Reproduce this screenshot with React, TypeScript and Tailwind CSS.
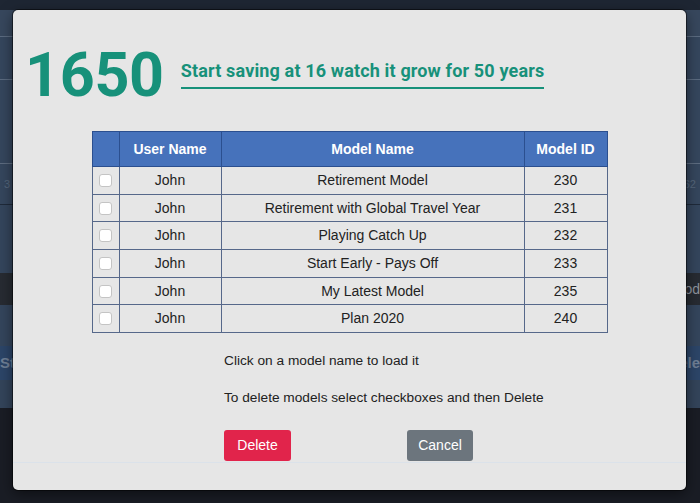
import React from 'react';

const models = [
    { user: 'John', name: 'Retirement Model', id: 230 },
    { user: 'John', name: 'Retirement with Global Travel Year', id: 231 },
    { user: 'John', name: 'Playing Catch Up', id: 232 },
    { user: 'John', name: 'Start Early - Pays Off', id: 233 },
    { user: 'John', name: 'My Latest Model', id: 235 },
    { user: 'John', name: 'Plan 2020', id: 240 },
];

const App = () => {
    return (
        <div className="relative w-[700px] h-[503px] overflow-hidden bg-[#1b1f27] font-['Liberation_Sans',Arial,sans-serif]">
            {/* dimmed page behind the modal */}
            <div className="flex flex-col h-full">
                <div className="h-[10px] bg-[#1e2633]" />
                <div className="h-[27px] bg-[#37475d] border-b border-[#5b6b80]" />
                <div className="h-[43px] bg-[#35465d] border-b border-[#5b6b80]" />
                <div className="h-[84px] bg-[#35465d] border-b border-[#5d6c80]" />
                <div className="h-[41px] bg-[#35465d] border-b border-[#1f2a3a] flex items-center justify-between px-1 text-[11px] text-[#56667c]">
                    <span>3</span>
                    <span>62</span>
                </div>
                <div className="h-[68px] bg-[#34455c]" />
                <div className="h-[32px] bg-[#272b32] flex items-center justify-end text-[14px] text-[#8d939c]">od</div>
                <div className="h-[41px] bg-[#34455c]" />
                <div className="h-[34px] bg-[#2c4568] flex items-center justify-between text-[15px] font-bold text-[#6f7f95]">
                    <span>St</span>
                    <span>ele</span>
                </div>
                <div className="h-[28px] bg-[#33445a]" />
                <div className="flex-1 bg-[#1a1d25]" />
            </div>

            {/* modal */}
            <div className="absolute left-[13px] top-[10px] w-[673px] h-[480px] bg-[#e6e6e6] rounded-[5px] shadow-[0_0_0_1px_rgba(0,0,0,0.5),0_4px_14px_rgba(0,0,0,0.5)] flex flex-col">
                <div className="flex items-end pl-[12px] pt-[34px] font-['Roboto',sans-serif] text-[#17917a]">
                    <span className="text-[61px] font-bold leading-[62px] tracking-[-0.3px]">1650</span>
                    <h2 className="ml-[17px] mb-[17px] text-[18px] font-bold leading-[24px] border-b-2 border-[#17917a] pb-[4px] tracking-[0.15px]">
                        Start saving at 16 watch it grow for 50 years
                    </h2>
                </div>

                <table className="mx-auto mt-[25px] w-[516px] border-collapse text-[14px] text-[#222]">
                    <thead>
                        <tr className="bg-[#4672bb] text-white font-bold h-[35px]">
                            <th className="w-[27px] border border-[#2b4f8f]" />
                            <th className="w-[102px] border border-[#2b4f8f]">User Name</th>
                            <th className="w-[303px] border border-[#2b4f8f]">Model Name</th>
                            <th className="border border-[#2b4f8f]">Model ID</th>
                        </tr>
                    </thead>
                    <tbody>
                        {models.map(m => (
                            <tr key={m.id} className="h-[27.7px] text-center">
                                <td className="border border-[#56688a]">
                                    <div className="mx-auto w-[13px] h-[13px] bg-white border border-[#c4c4c4] rounded-[3px]" />
                                </td>
                                <td className="border border-[#56688a]">{m.user}</td>
                                <td className="border border-[#56688a]">{m.name}</td>
                                <td className="border border-[#56688a]">{m.id}</td>
                            </tr>
                        ))}
                    </tbody>
                </table>

                <div className="pl-[211px] mt-[19px] text-[13.7px] text-[#222] flex flex-col">
                    <p className="leading-[18px]">Click on a model name to load it</p>
                    <p className="leading-[18px] mt-[19px]">To delete models select checkboxes and then Delete</p>
                    <div className="flex mt-[23px] gap-[116px]">
                        <button className="w-[67px] h-[31px] rounded-[3px] bg-[#e1244b] text-white text-[14px] font-medium">Delete</button>
                        <button className="w-[66px] h-[31px] rounded-[3px] bg-[#6c757d] text-white text-[14px] font-medium">Cancel</button>
                    </div>
                </div>
                <div className="mt-[1px] border-t border-[#dbe2ea]" />
            </div>
        </div>
    );
};

export default App;
